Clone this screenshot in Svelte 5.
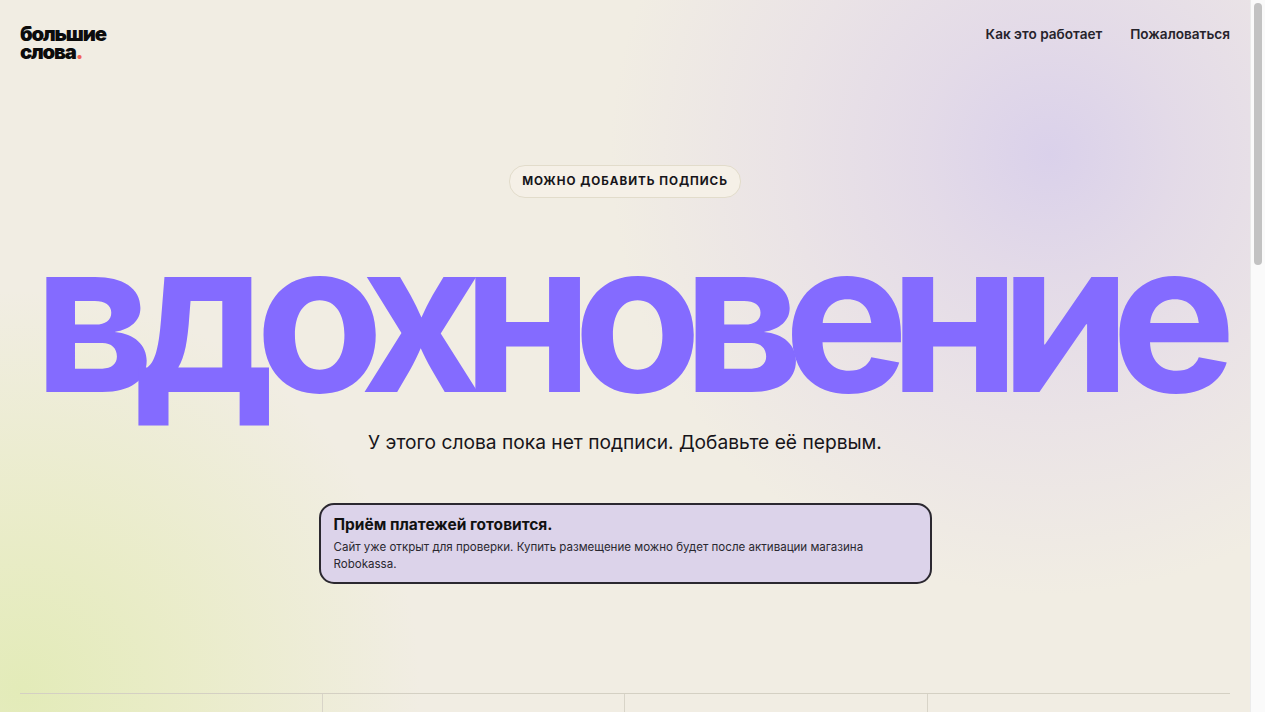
<script>
  const navLinks = ['Как это работает', 'Пожаловаться'];
  const cells = [1, 2, 3, 4];
</script>

<div class="page">
  <header class="top">
    <a class="logo" href="#top">большие<br />слова<span class="dot">.</span></a>
    <nav>
      {#each navLinks as link}
        <a href="#top">{link}</a>
      {/each}
    </nav>
  </header>

  <main class="hero">
    <div class="pill">Можно добавить подпись</div>
    <h1>вдохновение</h1>
    <p class="caption">У этого слова пока нет подписи. Добавьте её первым.</p>

    <div class="notice">
      <strong>Приём платежей готовится.</strong>
      <p>Сайт уже открыт для проверки. Купить размещение можно будет после активации магазина Robokassa.</p>
    </div>
  </main>

  <section class="stats">
    {#each cells as cell (cell)}
      <div class="cell"></div>
    {/each}
  </section>
</div>

<!-- headless browser hides the real scrollbar, so it is drawn -->
<div class="scrollbar"><div class="thumb"></div></div>

<style>
  :global(body) {
    background-color: #f1ede3;
    background-image:
      radial-gradient(circle at 1050px 155px, rgba(214, 204, 236, 0.85) 0, rgba(224, 214, 233, 0.8) 130px, rgba(230, 221, 232, 0.6) 270px, rgba(241, 237, 227, 0) 440px),
      radial-gradient(circle at 20px 690px, rgba(226, 235, 182, 0.95) 0, rgba(232, 236, 195, 0.8) 170px, rgba(241, 237, 227, 0) 400px);
    background-attachment: fixed;
    font-family: "Inter", "Noto Sans", sans-serif;
    color: #111;
    overflow-x: hidden;
  }

  .page {
    height: 1900px;
    margin-right: 15px;
  }

  .scrollbar {
    position: fixed;
    top: 0;
    right: 0;
    bottom: 0;
    width: 14px;
    background: #fafafa;
    border-left: 1px solid #ebebeb;
  }

  .thumb {
    width: 8px;
    height: 262px;
    margin: 3px 0 0 3px;
    background: #c2c2c2;
    border-radius: 4px;
  }

  .top {
    display: flex;
    justify-content: space-between;
    align-items: flex-start;
    padding: 25px 20px 0;
  }

  .logo {
    font-size: 20.3px;
    line-height: 18px;
    font-weight: 900;
    letter-spacing: -1.2px;
    color: #0c0c0c;
    text-decoration: none;
  }

  .dot {
    color: #f0645a;
  }

  nav {
    display: flex;
    gap: 28px;
    padding-top: 1px;
  }

  nav a {
    font-size: 13.6px;
    line-height: 17px;
    font-weight: 600;
    color: #26232b;
    text-decoration: none;
  }

  .hero {
    display: flex;
    flex-direction: column;
    align-items: center;
    padding-top: 104px;
  }

  .pill {
    padding: 0 12px;
    height: 31px;
    line-height: 31px;
    border: 1px solid #e2dccb;
    border-radius: 16px;
    background: #f5f0e7;
    font-size: 11.7px;
    font-weight: 700;
    letter-spacing: 0.96px;
    text-transform: uppercase;
    color: #17151a;
  }

  h1 {
    margin: 10px 0 0;
    font-size: 210px;
    line-height: 216px;
    font-weight: 700;
    letter-spacing: -19.7px;
    color: #846bff;
    white-space: nowrap;
  }

  .caption {
    margin: 4px 0 0;
    font-size: 19.2px;
    line-height: 28px;
    color: #17151a;
  }

  .notice {
    box-sizing: border-box;
    width: 613px;
    height: 81px;
    margin-top: 47px;
    padding: 10px 13px;
    background: #dcd3ea;
    border: 2px solid #2b2830;
    border-radius: 15px;
  }

  .notice strong {
    display: block;
    font-size: 15.5px;
    line-height: 19px;
    font-weight: 700;
    color: #111;
  }

  .notice p {
    margin: 5px 0 0;
    font-size: 11.55px;
    line-height: 17px;
    color: #2a2830;
  }

  .stats {
    display: grid;
    grid-template-columns: repeat(4, 1fr);
    margin: 109px 20px 0;
    border-top: 1px solid #d4d0c3;
  }

  .cell {
    height: 220px;
    border-right: 1px solid #d8d4c8;
  }

  .cell:last-child {
    border-right: 0;
  }
</style>
